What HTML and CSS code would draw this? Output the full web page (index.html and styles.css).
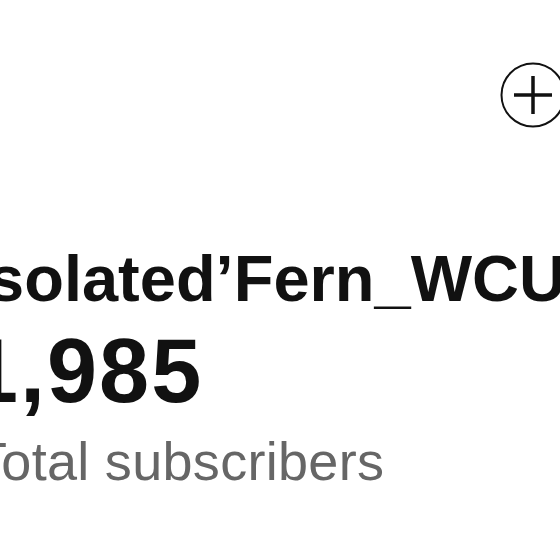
FILE: index.html
```html
<!DOCTYPE html>
<html lang="en">

<head>
  <meta charset="UTF-8" />
  <meta name="viewport" content="width=device-width, initial-scale=1.0" />
  <title>Channel</title>

  <link rel="stylesheet" href="styles.css">
</head>

<body>
  <div class="page">
    <div class="toolbar">
      <button class="add" aria-label="Add">
        <svg viewBox="0 0 66 66" width="66" height="66">
          <circle cx="33" cy="33" r="31.5" fill="none" stroke="#111" stroke-width="2" />
          <path d="M14 33 H52 M33 14 V52" stroke="#111" stroke-width="3.5" fill="none" />
        </svg>
      </button>
    </div>

    <div class="channel">
      <h1 class="name">Isolated’Fern_WCU</h1>
      <p class="count">1,985</p>
      <p class="label">Total subscribers</p>
    </div>
  </div>
</body>

</html>
```

FILE: styles.css
```css
* {
  font-family: "Liberation Sans", Arial, sans-serif;
  box-sizing: border-box;
}

html,
body {
  margin: 0;
  background-color: #fff;
  overflow: hidden;
}

.page {
  padding-top: 62px;
}

.toolbar {
  display: flex;
  justify-content: flex-end;
  margin-right: -6px;
}

.add {
  display: block;
  padding: 0;
  border: 0;
  background: none;
  width: 66px;
  height: 66px;
}

.add svg {
  display: block;
}

.channel {
  margin-top: 114px;
  margin-left: -30px;
  white-space: nowrap;
}

.name {
  margin: 0;
  font-size: 65px;
  line-height: 74px;
  font-weight: 700;
  color: #111;
}

.count {
  margin: 6px 0 0 -2px;
  font-size: 90px;
  line-height: 98px;
  font-weight: 700;
  letter-spacing: 2px;
  color: #111;
}

.label {
  margin: 10px 0 0 4px;
  font-size: 54px;
  line-height: 62px;
  letter-spacing: 0.3px;
  color: #666;
}
```
